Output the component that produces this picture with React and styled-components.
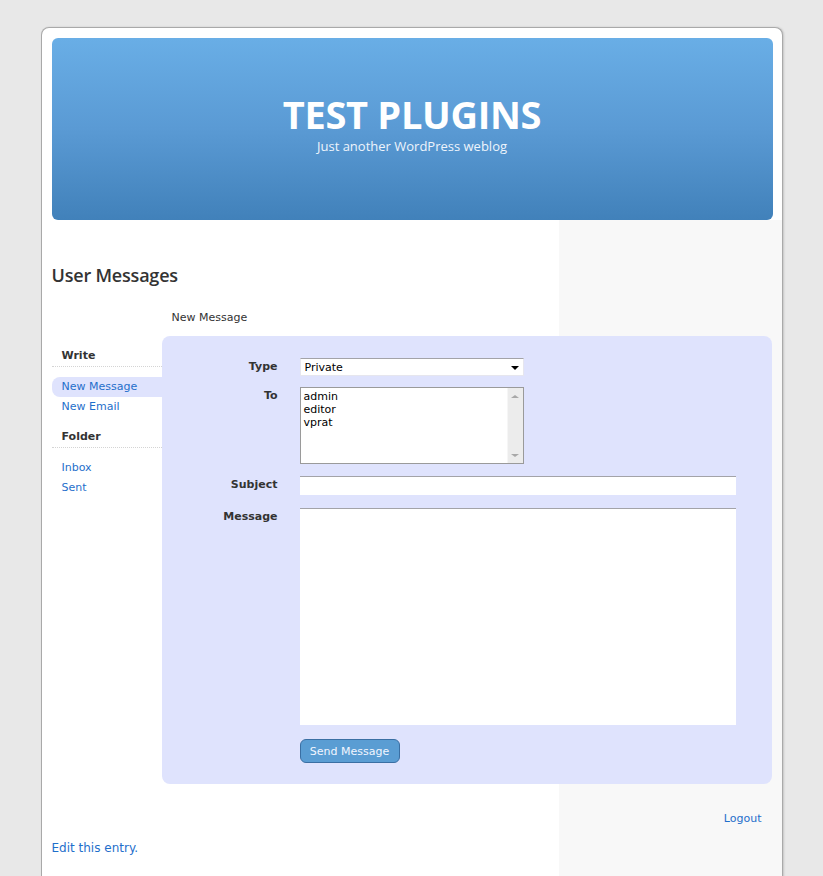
import styled, { createGlobalStyle } from 'styled-components';

const GlobalStyle = createGlobalStyle`
  body {
    margin: 0;
    background: #e8e8e8;
    font-family: "DejaVu Sans", Verdana, sans-serif;
    font-size: 11px;
    color: #333;
  }
`;

const Page = styled.div`
  width: 740px;
  margin: 27px auto 0;
  background: #fff;
  border: 1px solid #a9a9a9;
  border-bottom: none;
  border-radius: 8px 8px 0 0;
  box-shadow: 1px 0 2px rgba(0, 0, 0, 0.15);
`;

const HeaderWrap = styled.div`
  padding: 10px 9px 0 10px;
`;

const Header = styled.header`
  height: 182px;
  border-radius: 6px;
  background: linear-gradient(to bottom, #69aee6 0%, #5a9ad4 50%, #4181ba 100%);
  color: #fff;
  display: flex;
  flex-direction: column;
  align-items: center;
  font-family: "Open Sans", sans-serif;
`;

const SiteTitle = styled.h1`
  margin: 58px 0 0;
  font-size: 38px;
  line-height: 36px;
  font-weight: 700;
  letter-spacing: -0.3px;
`;

const Tagline = styled.div`
  font-size: 13px;
  line-height: 16px;
  margin-top: 6px;
  color: #eef4fc;
`;

const Body = styled.div`
  padding: 0 10px;
  min-height: 660px;
  background: linear-gradient(90deg, #fff 0 517px, #f8f8f8 517px);
`;

const PageTitle = styled.h2`
  margin: 0;
  padding-top: 43px;
  font-family: "Open Sans", sans-serif;
  font-size: 18px;
  line-height: 24px;
  font-weight: 600;
  color: #333;
  letter-spacing: -0.2px;
`;

const Messages = styled.div`
  display: grid;
  grid-template-columns: 110px 610px;
  margin-top: 23px;
`;

const Nav = styled.nav`
  padding-top: 38px;
`;

const NavHeading = styled.div`
  font-weight: bold;
  line-height: 16px;
  padding: ${(p) => (p.$first ? '0' : '12px')} 10px 2px;
  border-bottom: 1px dotted #d4d4d4;
  margin-bottom: 10px;
`;

const NavLink = styled.a`
  display: block;
  height: 20px;
  line-height: 20px;
  padding-left: 10px;
  color: #1f6fcb;
  text-decoration: none;
  background: ${(p) => (p.$active ? '#dfe3fd' : 'transparent')};
  border-radius: 8px 0 0 8px;
`;

const Content = styled.div``;

const Caption = styled.div`
  line-height: 16px;
  padding-left: 10px;
  margin-bottom: 10px;
`;

const Panel = styled.div`
  background: #dfe3fd;
  border-radius: 8px;
  padding: 22px 36px 21px 0;
  display: grid;
  grid-template-columns: 116px 1fr;
  column-gap: 22px;
  row-gap: 12px;
  align-items: start;
`;

const Label = styled.label`
  text-align: right;
  font-weight: bold;
  line-height: 16px;
  padding-top: 1px;
`;

const SelectWrap = styled.div`
  position: relative;
  width: 224px;
  height: 18px;
  margin-bottom: -1px;
`;

const Select = styled.select`
  appearance: none;
  width: 100%;
  height: 18px;
  margin: 0;
  padding: 0 0 0 4px;
  border: 1px solid #e6e6ee;
  border-top-color: #a3a3a8;
  background: #fff;
  font-family: inherit;
  font-size: 11px;
  color: #000;
  outline: none;
`;

const Arrow = styled.span`
  position: absolute;
  right: 5px;
  top: 8px;
  width: 0;
  height: 0;
  border-left: 4px solid transparent;
  border-right: 4px solid transparent;
  border-top: 4px solid #000;
  pointer-events: none;
`;

const Listbox = styled.div`
  width: 222px;
  height: 75px;
  border: 1px solid #9a9a9a;
  background: #fff;
  display: flex;
`;

const Options = styled.ul`
  flex: 1;
  list-style: none;
  margin: 0;
  padding: 2px 3px;
  font-size: 11px;
  line-height: 13px;
  color: #000;
`;

const Scrollbar = styled.div`
  width: 15px;
  background: #ececec;
  border-left: 1px solid #f6f6f6;
  display: flex;
  flex-direction: column;
  justify-content: space-between;
  align-items: center;
  padding: 7px 0 6px;
`;

const ScrollArrow = styled.span`
  width: 0;
  height: 0;
  border-left: 4px solid transparent;
  border-right: 4px solid transparent;
  ${(p) => (p.$up ? 'border-bottom: 3px solid #a8a8a8;' : 'border-top: 3px solid #a8a8a8;')}
`;

const TextInput = styled.input`
  box-sizing: border-box;
  width: 436px;
  height: 19px;
  margin: 0 0 1px;
  border: none;
  border-top: 1px solid #a3a3a8;
  background: #fff;
  outline: none;
`;

const TextArea = styled.textarea`
  box-sizing: border-box;
  display: block;
  width: 436px;
  height: 217px;
  margin: 0;
  border: none;
  border-top: 1px solid #a3a3a8;
  background: #fff;
  resize: none;
  outline: none;
`;

const Spacer = styled.div``;

const Button = styled.button`
  width: 100px;
  height: 24px;
  margin-top: 2px;
  padding: 0;
  background: #5a9dd3;
  border: 1px solid #3a6fa3;
  border-radius: 6px;
  color: #f2f6ff;
  font-family: inherit;
  font-size: 11px;
  cursor: pointer;
`;

const Footer = styled.div`
  display: flex;
  justify-content: flex-end;
  padding: 27px 10px 0;
  line-height: 16px;
`;

const Link = styled.a`
  color: #1f6fcb;
  text-decoration: none;
`;

const EditLink = styled.a`
  display: block;
  margin-top: 13px;
  font-size: 12px;
  line-height: 16px;
  color: #1f6fcb;
  text-decoration: none;
`;

export default function App() {
  return (
    <>
      <GlobalStyle />
      <Page>
        <HeaderWrap>
          <Header>
            <SiteTitle>TEST PLUGINS</SiteTitle>
            <Tagline>Just another WordPress weblog</Tagline>
          </Header>
        </HeaderWrap>
        <Body>
          <PageTitle>User Messages</PageTitle>
          <Messages>
            <Nav>
              <NavHeading $first>Write</NavHeading>
              <NavLink href="#" $active>New Message</NavLink>
              <NavLink href="#">New Email</NavLink>
              <NavHeading>Folder</NavHeading>
              <NavLink href="#">Inbox</NavLink>
              <NavLink href="#">Sent</NavLink>
            </Nav>
            <Content>
              <Caption>New Message</Caption>
              <Panel>
                <Label>Type</Label>
                <SelectWrap>
                  <Select defaultValue="private">
                    <option value="private">Private</option>
                  </Select>
                  <Arrow />
                </SelectWrap>
                <Label>To</Label>
                <Listbox>
                  <Options>
                    <li>admin</li>
                    <li>editor</li>
                    <li>vprat</li>
                  </Options>
                  <Scrollbar>
                    <ScrollArrow $up />
                    <ScrollArrow />
                  </Scrollbar>
                </Listbox>
                <Label>Subject</Label>
                <TextInput type="text" />
                <Label>Message</Label>
                <TextArea />
                <Spacer />
                <Button type="button">Send Message</Button>
              </Panel>
              <Footer>
                <Link href="#">Logout</Link>
              </Footer>
            </Content>
          </Messages>
          <EditLink href="#">Edit this entry.</EditLink>
        </Body>
      </Page>
    </>
  );
}
